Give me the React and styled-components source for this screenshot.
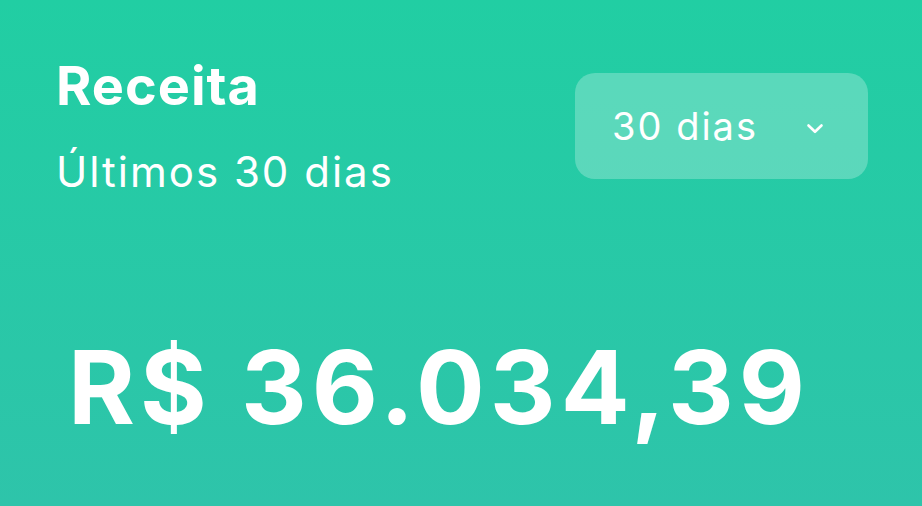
import React from "react";
import styled, { createGlobalStyle } from "styled-components";

const Global = createGlobalStyle`
  html, body { margin: 0; padding: 0; }
  body { width: 922px; height: 506px; overflow: hidden; font-family: Inter, "Noto Sans", sans-serif; }
`;

const Card = styled.div`
  box-sizing: border-box;
  width: 922px;
  height: 506px;
  background: linear-gradient(180deg, #21cea3 0%, #2ec4aa 100%);
  color: #ffffff;
  padding: 54px 54px 0 56px;
  display: flex;
  flex-direction: column;
`;

const Header = styled.div`
  display: flex;
  justify-content: space-between;
  align-items: flex-start;
`;

const Titles = styled.div`
  display: flex;
  flex-direction: column;
`;

const Title = styled.div`
  font-size: 54px;
  font-weight: 700;
  line-height: 64px;
  letter-spacing: 1px;
`;

const Subtitle = styled.div`
  font-size: 42px;
  font-weight: 400;
  line-height: 48px;
  letter-spacing: 2px;
  margin-top: 30px;
`;

const Select = styled.button`
  box-sizing: border-box;
  width: 293px;
  height: 106px;
  margin-top: 19px;
  border: none;
  border-radius: 20px;
  background: rgba(255, 255, 255, 0.25);
  color: #fff;
  display: flex;
  align-items: center;
  justify-content: space-between;
  padding: 0 44px 0 37px;
  font-family: Inter, "Noto Sans", sans-serif;
  font-size: 38px;
  font-weight: 400;
  letter-spacing: 2px;
`;

const ChevronIcon = styled.svg`
  margin-top: 5px;
`;

const Amount = styled.div`
  margin-top: 136px;
  margin-left: 12px;
  font-size: 102px;
  font-weight: 700;
  line-height: 110px;
  letter-spacing: 5px;
`;

const Chevron = () => (
  <ChevronIcon width="18" height="12" viewBox="0 0 18 12" fill="none">
    <path d="M2.5 2.5L9 8.8L15.5 2.5" stroke="#fff" strokeWidth="2.6" strokeLinecap="round" strokeLinejoin="round" />
  </ChevronIcon>
);

export default function App() {
  return (
    <>
      <Global />
      <Card>
        <Header>
          <Titles>
            <Title>Receita</Title>
            <Subtitle>Últimos 30 dias</Subtitle>
          </Titles>
          <Select>
            <span>30 dias</span>
            <Chevron />
          </Select>
        </Header>
        <Amount>R$ 36.034,39</Amount>
      </Card>
    </>
  );
}
